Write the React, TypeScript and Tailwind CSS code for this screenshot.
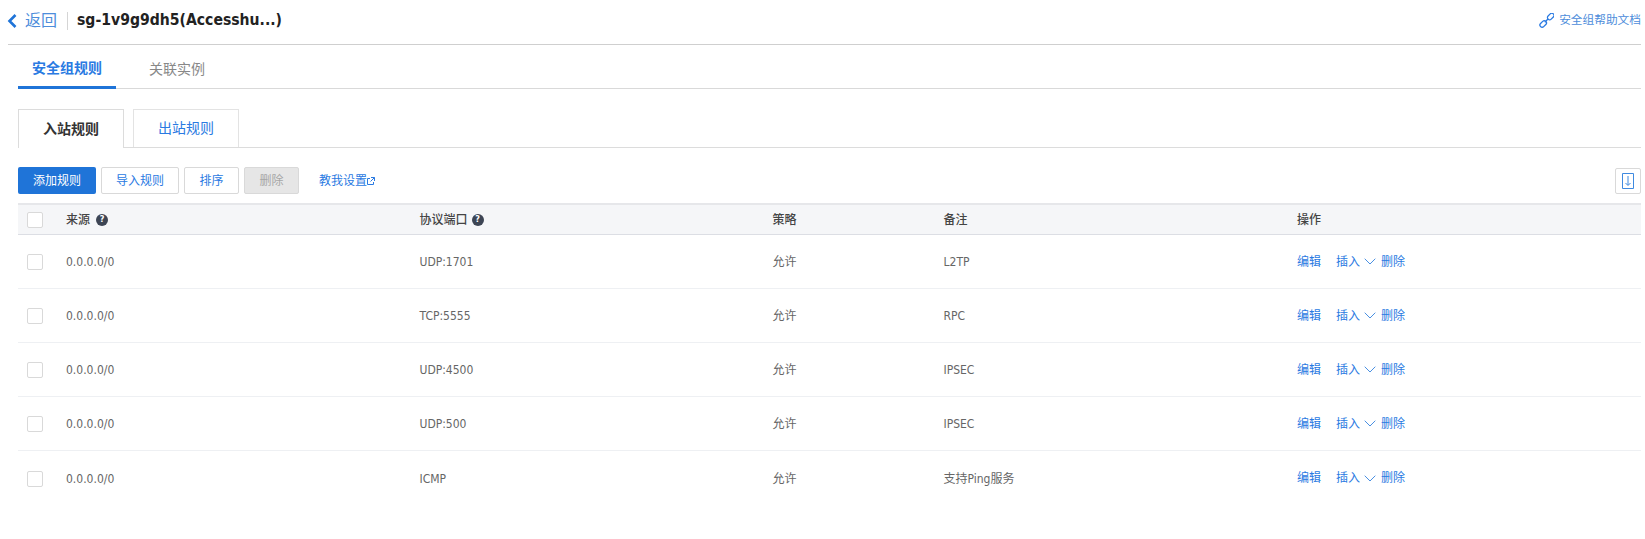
import React from "react";

const rows = [
  ["UDP:1701", "L2TP"],
  ["TCP:5555", "RPC"],
  ["UDP:4500", "IPSEC"],
  ["UDP:500", "IPSEC"],
  ["ICMP", "支持Ping服务"],
];

function Check() {
  return <span className="block w-4 h-4 bg-white border border-[#d9d9d9] rounded-[2px]" />;
}

function Help({ gap }: { gap: string }) {
  return (
    <span className={`inline-flex items-center justify-center w-3 h-3 rounded-full bg-[#3d4554] text-white text-[9px] leading-none font-bold ${gap}`}>?</span>
  );
}

function Row({ proto, note }: { proto: string; note: string }) {
  return (
    <div className="flex items-center h-[54px] border-b border-[#eef0f3] last:border-b-0 text-[#666] pt-[1px]">
      <div className="w-[48px] pl-[9px] shrink-0"><Check /></div>
      <div className="w-[353.5px] shrink-0">0.0.0.0/0</div>
      <div className="w-[353px] shrink-0">{proto}</div>
      <div className="w-[171px] shrink-0">允许</div>
      <div className="w-[353.5px] shrink-0">{note}</div>
      <div className="flex items-center text-[#2a7ae2] -mt-[1px]">
        <span>编辑</span>
        <span className="ml-[15px]">插入</span>
        <svg className="ml-[4px]" width="12" height="7" viewBox="0 0 12 7" fill="none" stroke="#4a90e2" strokeWidth="1"><path d="M.7.7 6 6l5.3-5.3" /></svg>
        <span className="ml-[5px]">删除</span>
      </div>
    </div>
  );
}

export default function App() {
  return (
    <div className="w-[1645px] h-[539px] bg-white px-[4px] text-[12px] overflow-hidden font-['DejaVu_Sans_Condensed','Noto_Sans_CJK_SC',sans-serif]">
      <div className="ml-[4px] h-[45px] border-b border-[#cfcfcf] flex items-center justify-between pb-[3px]">
        <div className="flex items-center -ml-[2px]">
          <svg width="12" height="16" viewBox="0 0 12 16" fill="none" stroke="#1f74d8" strokeWidth="2.6"><path d="M9.500 2 3.500 8l6 6" /></svg>
          <span className="ml-[7px] text-[16px] text-[#4d8ddb]">返回</span>
          <span className="ml-[10px] h-[18px] w-px bg-[#d5d5d5]" />
          <span className="ml-[9px] text-[15.600px] font-bold text-[#222]">sg-1v9g9dh5(Accesshu...)</span>
        </div>
        <div className="flex items-center text-[#4d8ddb] text-[11.700px]">
          <svg width="15" height="15" viewBox="0 0 15 15" fill="none" stroke="#2a7ae2" strokeWidth="1.300">
            <rect x="7.300" y="0.600" width="7.400" height="4.400" rx="2.200" transform="rotate(-45 11 2.800) translate(0 1)" />
            <rect x="0.500" y="8.800" width="7.400" height="4.400" rx="2.200" transform="rotate(-45 4.200 11)" />
            <path d="M5.800 9.200 9.200 5.800" />
          </svg>
          <span className="ml-[5px]">安全组帮助文档</span>
        </div>
      </div>

      <div className="ml-[14px] h-[44px] border-b border-[#d9d9d9] flex text-[14px]">
        <div className="w-[98px] h-[44px] border-b-[3px] border-[#1f74d8] pt-[6px] flex items-center justify-center font-bold text-[#2a7ae2]">安全组规则</div>
        <div className="ml-[33px] h-[43px] pt-[5px] flex items-center text-[#888]">关联实例</div>
      </div>

      <div className="ml-[14px] mt-[20px] h-[39px] border-b border-[#dcdcdc] flex text-[14px]">
        <div className="w-[106px] h-[39px] border border-b-0 border-[#dcdcdc] bg-white flex items-center justify-center font-bold text-[#333]">入站规则</div>
        <div className="ml-[9px] w-[106px] h-[38px] border border-b-0 border-[#e3e3e3] flex items-center justify-center text-[#2a7ae2]">出站规则</div>
      </div>

      <div className="ml-[14px] mt-[19px] h-[27px] flex items-center">
        <button className="w-[78px] h-[27px] rounded-[2px] bg-[#1f74d8] text-white">添加规则</button>
        <button className="ml-[5px] w-[78px] h-[27px] rounded-[2px] bg-white border border-[#d9d9d9] text-[#2a7ae2]">导入规则</button>
        <button className="ml-[5px] w-[55px] h-[27px] rounded-[2px] bg-white border border-[#d9d9d9] text-[#2a7ae2]">排序</button>
        <button className="ml-[5px] w-[55px] h-[27px] rounded-[2px] bg-[#e6e6e6] border border-[#d9d9d9] text-[#a6a6a6]">删除</button>
        <span className="ml-[20px] flex items-center text-[#2a7ae2]">
          教我设置
          <svg width="8" height="8" viewBox="0 0 8 8" fill="none" stroke="#2a7ae2" strokeWidth="1"><path d="M3 1.500H.5v6h6V5M4 .5h3.500V4M7.500.5 3.500 4.500" /></svg>
        </span>
        <button className="ml-auto w-[26px] h-[26px] rounded-[2px] border border-[#d9d9d9] bg-white flex items-center justify-center">
          <svg width="14" height="16" viewBox="0 0 14 16" fill="none" stroke="#3f8ae0" strokeWidth="1"><path d="M1.500.5h11v15h-11zM7 3v9M4.500 10 7 12.500 9.500 10" /></svg>
        </button>
      </div>

      <div className="ml-[14px] mt-[9px] text-[12px]">
        <div className="flex items-center h-[32px] bg-[#f5f6f8] border-t-2 border-t-[#e6e7ea] border-b border-b-[#dcdee4] font-medium text-[#444]">
          <div className="w-[48px] pl-[9px] shrink-0"><Check /></div>
          <div className="w-[353.5px] shrink-0 flex items-center">来源<Help gap="ml-[6px]" /></div>
          <div className="w-[353px] shrink-0 flex items-center">协议端口<Help gap="ml-[4px]" /></div>
          <div className="w-[171px] shrink-0">策略</div>
          <div className="w-[353.5px] shrink-0">备注</div>
          <div>操作</div>
        </div>
        {rows.map((r, i) => <Row key={i} proto={r[0]} note={r[1]} />)}
      </div>
    </div>
  );
}
